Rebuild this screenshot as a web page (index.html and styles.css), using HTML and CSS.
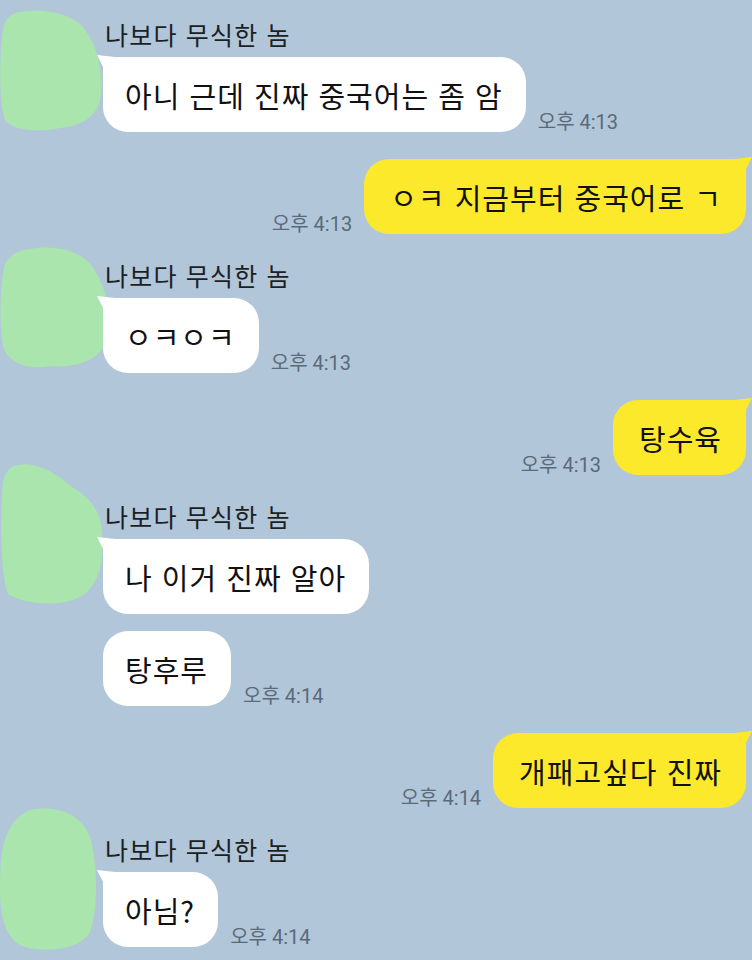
FILE: index.html
```html
<!DOCTYPE html>
<html lang="ko">
<head>
<meta charset="utf-8">
<link rel="stylesheet" href="styles.css">
</head>
<body>
<div class="chat">
  <div class="group">
    <svg class="blob blob1" width="106" height="124" viewBox="0 0 106 124"><path d="M20,2 C45,-2 75,4 85,20 C100,40 104,70 100,90 C96,108 80,116 60,118 C40,122 15,122 5,110 C-2,90 0,40 3,20 C5,8 12,3 20,2 Z"/></svg>
    <div class="name">나보다 무식한 놈</div>
    <div class="rows">
      <div class="row"><div class="bubble tail">아니 근데 진짜 중국어는 좀 암</div><span class="time">오후 4:13</span></div>
    </div>
  </div>
  <div class="row sent"><span class="time">오후 4:13</span><div class="bubble mine tail">ㅇㅋ 지금부터 중국어로 ㄱ</div></div>
  <div class="group">
    <svg class="blob blob2" width="112" height="128" viewBox="0 0 112 128"><path d="M30,3 C55,-2 85,5 95,25 C108,45 112,75 106,95 C100,115 75,122 50,120 C30,124 8,118 3,100 C-1,75 0,35 5,18 C10,8 20,4 30,3 Z"/></svg>
    <div class="name">나보다 무식한 놈</div>
    <div class="rows">
      <div class="row"><div class="bubble tail">ㅇㅋㅇㅋ</div><span class="time">오후 4:13</span></div>
    </div>
  </div>
  <div class="row sent"><span class="time">오후 4:13</span><div class="bubble mine tail">탕수육</div></div>
  <div class="group">
    <svg class="blob blob3" width="104" height="146" viewBox="0 0 104 146"><path d="M18,3 C35,-1 55,10 72,25 C88,35 100,45 102,70 C105,100 98,125 80,135 C60,145 25,143 8,132 C0,110 0,50 3,20 C5,10 10,4 18,3 Z"/></svg>
    <div class="name">나보다 무식한 놈</div>
    <div class="rows">
      <div class="row"><div class="bubble tail">나 이거 진짜 알아</div></div>
      <div class="row"><div class="bubble">탕후루</div><span class="time">오후 4:14</span></div>
    </div>
  </div>
  <div class="row sent"><span class="time">오후 4:14</span><div class="bubble mine tail">개패고싶다 진짜</div></div>
  <div class="group">
    <svg class="blob blob4" width="98" height="146" viewBox="0 0 98 146"><path d="M30,3 C55,-2 80,5 90,30 C98,60 98,100 90,125 C80,142 50,146 25,140 C5,133 0,110 0,80 C0,45 3,15 30,3 Z"/></svg>
    <div class="name">나보다 무식한 놈</div>
    <div class="rows">
      <div class="row"><div class="bubble tail">아님?</div><span class="time">오후 4:14</span></div>
    </div>
  </div>
</div>
</body>
</html>
```
FILE: styles.css
```css
html, body {
  margin: 0;
  padding: 0;
}
body {
  background: #b2c6d9;
  font-family: "Noto Sans CJK KR", "Noto Sans", sans-serif;
  color: #141414;
  width: 752px;
  height: 960px;
  overflow: hidden;
}
.chat {
  display: flex;
  flex-direction: column;
  gap: 27px;
  padding-top: 20px;
}
.group {
  position: relative;
  display: flex;
  flex-direction: column;
  padding-left: 103px;
}
.blob {
  position: absolute;
  left: 0;
  fill: #aae5ae;
}
.blob1 { top: -10px; }
.blob2 { top: -15px; }
.blob3 { top: -40px; }
.blob4 { top: -28px; }
.name {
  font-size: 25px;
  letter-spacing: 1.2px;
  line-height: 28px;
  height: 28px;
  margin-bottom: 9px;
  margin-left: 2px;
  color: #1c1f24;
  white-space: nowrap;
}
.rows {
  display: flex;
  flex-direction: column;
  gap: 17px;
}
.row {
  display: flex;
  align-items: flex-end;
  gap: 12px;
}
.row.sent {
  justify-content: flex-end;
  padding-right: 6px;
}
.bubble {
  position: relative;
  height: 75px;
  box-sizing: border-box;
  display: flex;
  align-items: center;
  padding: 0 23px 0 22px;
  background: #ffffff;
  border-radius: 25px;
  font-size: 29px;
  letter-spacing: 1px;
  white-space: nowrap;
  color: #111111;
}
.bubble.mine {
  background: #fde92b;
  padding: 0 24px 0 26px;
}
.bubble.tail {
  border-top-left-radius: 6px;
}
.bubble.tail::before {
  content: "";
  position: absolute;
  top: -2px;
  left: -6px;
  width: 18px;
  height: 16px;
  background: inherit;
  clip-path: polygon(0 0, 100% 12%, 100% 100%, 45% 100%);
}
.bubble.mine.tail {
  border-top-left-radius: 25px;
  border-top-right-radius: 6px;
}
.bubble.mine.tail::before {
  left: auto;
  right: -6px;
  clip-path: polygon(100% 0, 0 12%, 0 100%, 55% 100%);
}
.time {
  font-family: Roboto, "Noto Sans CJK KR", sans-serif;
  font-size: 20px;
  line-height: 20px;
  margin-bottom: 0;
  color: #5a6a7b;
  white-space: nowrap;
}
```
